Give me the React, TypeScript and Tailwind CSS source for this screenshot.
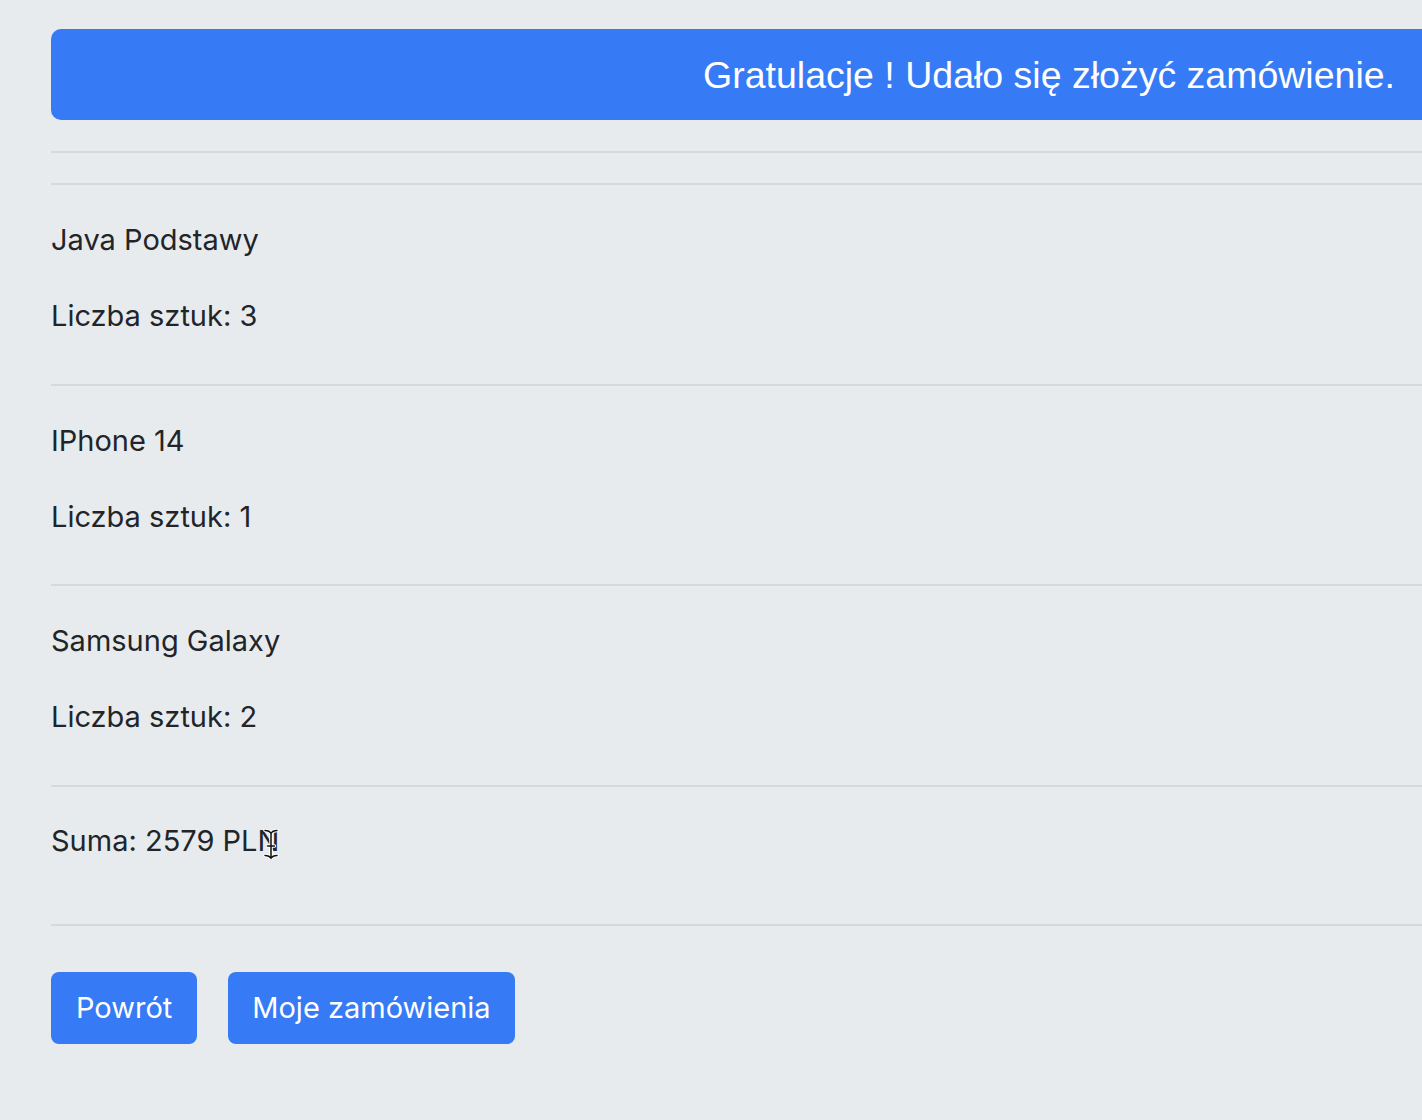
const items = [
  { name: 'Java Podstawy', qty: 3 },
  { name: 'IPhone 14', qty: 1 },
  { name: 'Samsung Galaxy', qty: 2 },
];

const Divider = () => <div className="h-[2px] bg-[#d5d8dc]" />;

// text cursor that was caught in the screenshot
const IBeam = () => (
  <svg
    className="absolute left-[211px] top-[9px] pointer-events-none"
    width="18"
    height="34"
    viewBox="0 0 16 34"
  >
    <path
      d="M2 1.5c3 0 5 1 6 3v25c1-2 3-3 6-3M14 1.5c-3 0-5 1-6 3v25c-1-2-3-3-6-3M4.5 17h7"
      fill="none"
      stroke="#fff"
      strokeWidth="3.5"
      strokeLinecap="round"
    />
    <path
      d="M2 1.5c3 0 5 1 6 3v25c1-2 3-3 6-3M14 1.5c-3 0-5 1-6 3v25c-1-2-3-3-6-3M4.5 17h7"
      fill="none"
      stroke="#111"
      strokeWidth="1.5"
      strokeLinecap="round"
    />
  </svg>
);

export default function App() {
  return (
    <div className="min-h-[1120px] bg-[#e8ebee] pl-[51px] pt-[29px] font-['Inter','Liberation_Sans',sans-serif] text-[29px] leading-[42px] text-[#212529]">
      {/* Success alert */}
      <div className="flex h-[91px] items-center justify-end rounded-l-[10px] bg-[#367af6] pr-[27px] font-['Liberation_Sans','Arial',sans-serif] text-[37.5px] text-white">
        Gratulacje ! Udało się złożyć zamówienie.
      </div>

      <div className="mt-[31px]">
        <Divider />
      </div>
      <div className="mt-[30px]">
        <Divider />
      </div>

      {/* Ordered items */}
      {items.map((item) => (
        <div key={item.name}>
          <div className="flex flex-col gap-[34px] pt-[34px] pb-[46.67px]">
            <p>{item.name}</p>
            <p>Liczba sztuk: {item.qty}</p>
          </div>
          <Divider />
        </div>
      ))}

      {/* Total */}
      <div className="pt-[33px] pb-[62px]">
        <p className="relative inline-block">
          Suma: 2579 PLN
          <IBeam />
        </p>
      </div>
      <Divider />

      {/* Actions */}
      <div className="mt-[46px] flex gap-[31px]">
        <button className="h-[72px] rounded-[8px] bg-[#367af6] px-[25px] text-white">
          Powrót
        </button>
        <button className="h-[72px] rounded-[8px] bg-[#367af6] px-[24px] text-white">
          Moje zamówienia
        </button>
      </div>
    </div>
  );
}
